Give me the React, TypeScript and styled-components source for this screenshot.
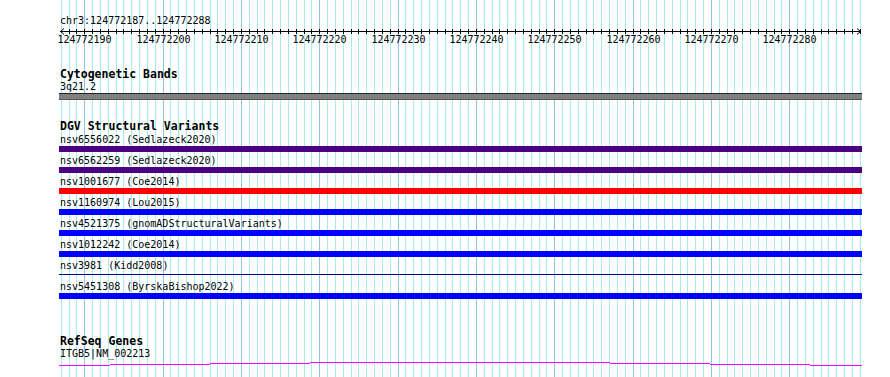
import React from "react";
import styled, { createGlobalStyle } from "styled-components";

const GlobalStyle = createGlobalStyle`
  html, body {
    margin: 0;
    padding: 0;
    background: #ffffff;
  }
  body {
    font-family: "DejaVu Sans Mono", "Liberation Mono", monospace;
  }
`;

const START = 124772187;
const BASES = 103;
const X0 = 60.8;
const STEP = 7.833;

const baseX = (k: number) => Math.round(X0 + k * STEP);

type Feature = {
  name: string;
  source: string;
  color: string;
  thin?: boolean;
};

const features: Feature[] = [
  { name: "nsv6556022", source: "Sedlazeck2020", color: "#4b0082" },
  { name: "nsv6562259", source: "Sedlazeck2020", color: "#4b0082" },
  { name: "nsv1001677", source: "Coe2014", color: "#ff0000" },
  { name: "nsv1160974", source: "Lou2015", color: "#0000ff" },
  { name: "nsv4521375", source: "gnomADStructuralVariants", color: "#0000ff" },
  { name: "nsv1012242", source: "Coe2014", color: "#0000ff" },
  { name: "nsv3981", source: "Kidd2008", color: "#00008b", thin: true },
  { name: "nsv5451308", source: "ByrskaBishop2022", color: "#0000ff" },
];

// stepped intron line of the gene: [x1, x2, y]
const geneSteps: [number, number, number][] = [
  [59, 110, 4.5],
  [110, 210, 3.5],
  [210, 310, 2.5],
  [310, 610, 1.5],
  [610, 710, 2.5],
  [710, 810, 3.5],
  [810, 862, 4.5],
];

export default function App() {
  return (
    <>
      <GlobalStyle />
      <Browser>
        <Grid width={890} height={377}>
          {Array.from({ length: BASES }, (_, k) => {
            const major = (START + k) % 10 === 0;
            return (
              <line
                key={k}
                x1={baseX(k) + 0.5}
                x2={baseX(k) + 0.5}
                y1={0}
                y2={377}
                stroke={major ? "#8cc4ea" : "#a8ecee"}
                strokeWidth={1}
              />
            );
          })}
        </Grid>

        <Tracks>
          <Location>chr3:124772187..124772288</Location>
          <Ruler width={890} height={19}>
            <line x1={60} x2={861} y1={4.5} y2={4.5} stroke="#000" />
            <polyline points="64,1.5 60.5,4.5 64,7.5" fill="none" stroke="#000" />
            <polyline points="857,1.5 860.5,4.5 857,7.5" fill="none" stroke="#000" />
            {Array.from({ length: BASES - 1 }, (_, k) => k + 1).map((k) => (
              <line
                key={k}
                x1={baseX(k) + 0.5}
                x2={baseX(k) + 0.5}
                y1={2}
                y2={7}
                stroke="#000"
              />
            ))}
            {Array.from({ length: BASES }, (_, k) => k)
              .filter((k) => (START + k) % 10 === 0)
              .map((k) => (
                <text
                  key={k}
                  x={baseX(k) + 0.5}
                  y={16}
                  textAnchor="middle"
                  fontSize={10}
                  fontFamily='"DejaVu Sans Mono", monospace'
                  fill="#000"
                >
                  {START + k}
                </text>
              ))}
          </Ruler>

          <Track $top={22}>
            <TrackTitle>Cytogenetic Bands</TrackTitle>
            <Label>3q21.2</Label>
            <Band />
          </Track>

          <Track $top={20}>
            <TrackTitle>DGV Structural Variants</TrackTitle>
            {features.map((f) => (
              <FeatureRow key={f.name}>
                <FeatureLabel>
                  {f.name} ({f.source})
                </FeatureLabel>
                <BarSlot>
                  <Bar $color={f.color} $thin={f.thin} />
                </BarSlot>
              </FeatureRow>
            ))}
          </Track>

          <Track $top={34}>
            <TrackTitle>RefSeq Genes</TrackTitle>
            <Label>ITGB5|NM_002213</Label>
            <Gene width={890} height={8}>
              {geneSteps.map(([x1, x2, y], i) => (
                <line key={i} x1={x1} x2={x2} y1={y} y2={y} stroke="#ff00ff" strokeWidth={1} />
              ))}
            </Gene>
          </Track>
        </Tracks>
      </Browser>
    </>
  );
}

const Browser = styled.div`
  position: relative;
  width: 890px;
  height: 377px;
  overflow: hidden;
  background: #ffffff;
`;

const Grid = styled.svg`
  position: absolute;
  left: 0;
  top: 0;
  z-index: 0;
`;

const Tracks = styled.div`
  position: relative;
  z-index: 1;
  display: flex;
  flex-direction: column;
  padding-top: 15px;
`;

const Location = styled.div`
  font-size: 10px;
  line-height: 12px;
  height: 12px;
  padding-left: 60px;
  color: #000;
`;

const Ruler = styled.svg`
  display: block;
`;

const Track = styled.section<{ $top: number }>`
  display: flex;
  flex-direction: column;
  margin-top: ${(p) => p.$top}px;
  padding-left: 59px;
  width: 803px;
`;

const TrackTitle = styled.div`
  font-size: 11.5px;
  font-weight: bold;
  line-height: 13px;
  height: 13px;
  padding-left: 1px;
  color: #000;
  white-space: nowrap;
`;

const Label = styled.div`
  font-size: 10px;
  line-height: 12px;
  height: 12px;
  padding-left: 1px;
  color: #000;
  white-space: nowrap;
`;

const Band = styled.div`
  height: 5px;
  background: #808080;
  border-top: 1px solid #222;
  border-bottom: 1px solid #555;
`;

const FeatureRow = styled.div`
  display: flex;
  flex-direction: column;
  margin-bottom: 2px;
`;

const FeatureLabel = styled.div`
  font-size: 10px;
  line-height: 13px;
  height: 13px;
  padding-left: 1px;
  color: #000;
  white-space: nowrap;
`;

const BarSlot = styled.div`
  height: 6px;
  display: flex;
  align-items: flex-start;
`;

const Bar = styled.div<{ $color: string; $thin?: boolean }>`
  width: 100%;
  height: ${(p) => (p.$thin ? "1px" : "6px")};
  margin-top: ${(p) => (p.$thin ? "2px" : "0")};
  background: ${(p) => p.$color};
`;

const Gene = styled.svg`
  display: block;
  margin-left: -59px;
  margin-top: 1px;
`;
